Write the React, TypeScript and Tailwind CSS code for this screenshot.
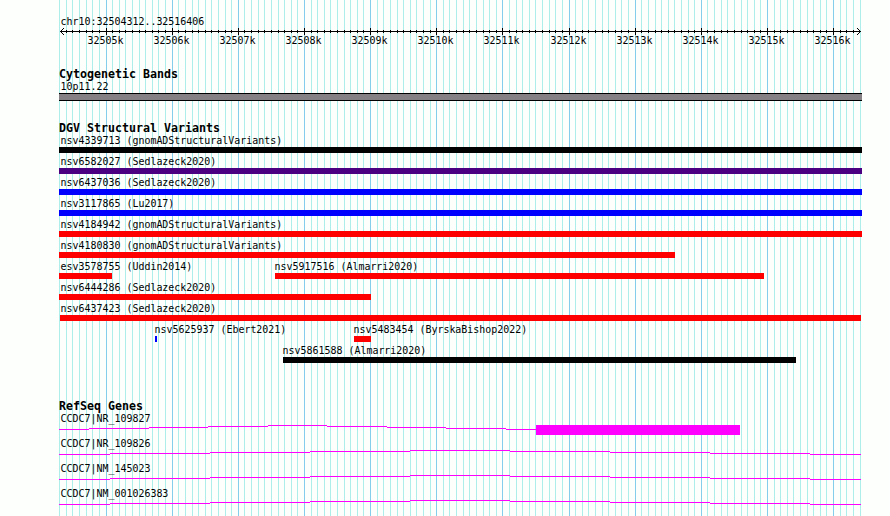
interface Feature {
  label: string
  start: number
  end: number
  color: string
}

interface Gene {
  label: string
  steps: [number, number][]
  exon?: [number, number]
}

const LEFT = 59
// 800px over 12095 bases, one grid line per 100 bases
const GRID_STEP = 80000 / 12095
const GRID = Array.from({ length: 122 }, (_, i) => Math.floor(59.735 + i * GRID_STEP))
const MAJOR = GRID.filter((_, i) => i % 10 === 7)
const MINOR = GRID.filter((_, i) => i % 10 !== 7)

const RED = '#ff0000'
const BLUE = '#0000ff'
const BLACK = '#000000'

const rows: Feature[][] = [
  [{ label: 'nsv4339713 (gnomADStructuralVariants)', start: 59, end: 862, color: BLACK }],
  [{ label: 'nsv6582027 (Sedlazeck2020)', start: 59, end: 862, color: '#4b0082' }],
  [{ label: 'nsv6437036 (Sedlazeck2020)', start: 59, end: 862, color: BLUE }],
  [{ label: 'nsv3117865 (Lu2017)', start: 59, end: 862, color: BLUE }],
  [{ label: 'nsv4184942 (gnomADStructuralVariants)', start: 59, end: 862, color: RED }],
  [{ label: 'nsv4180830 (gnomADStructuralVariants)', start: 59, end: 675, color: RED }],
  [
    { label: 'esv3578755 (Uddin2014)', start: 59, end: 112, color: RED },
    { label: 'nsv5917516 (Almarri2020)', start: 275, end: 764, color: RED },
  ],
  [{ label: 'nsv6444286 (Sedlazeck2020)', start: 59, end: 371, color: RED }],
  [{ label: 'nsv6437423 (Sedlazeck2020)', start: 60, end: 861, color: RED }],
  [
    { label: 'nsv5625937 (Ebert2021)', start: 155, end: 157, color: BLUE },
    { label: 'nsv5483454 (ByrskaBishop2022)', start: 354, end: 371, color: RED },
  ],
  [{ label: 'nsv5861588 (Almarri2020)', start: 283, end: 796, color: BLACK }],
]

// intron line as [x, offset from the row's lowest level]
const longIntron: [number, number][] = [
  [59, 0], [110, 1], [210, 2], [310, 3], [410, 4], [510, 3], [610, 2], [710, 1], [810, 0], [861, 0],
]

const genes: Gene[] = [
  {
    label: 'CCDC7|NR_109827',
    steps: [[59, 0], [89, 1], [149, 2], [208, 3], [268, 4], [327, 3], [387, 2], [446, 1], [506, 0], [536, 0]],
    exon: [536, 740],
  },
  { label: 'CCDC7|NR_109826', steps: longIntron },
  { label: 'CCDC7|NM_145023', steps: longIntron },
  { label: 'CCDC7|NM_001026383', steps: longIntron },
]

export default function App() {
  return (
    <div className="relative h-[516px] w-[890px] overflow-hidden bg-[#fcfffc] font-['DejaVu_Sans_Mono',monospace] text-black">
      <GridLines />
      <main className="relative flex flex-col pl-[59px] pt-4">
        <Label text="chr10:32504312..32516406" inset={1.5} />
        <Ruler />
        <section className="mt-[21px]">
          <Title text="Cytogenetic Bands" />
          <Label text="10p11.22" inset={1.5} />
          <div className="h-2 w-[803px] border-y border-black bg-[#848084]" />
        </section>
        <section className="mt-[21px]">
          <Title text="DGV Structural Variants" />
          {rows.map((row, i) => (
            <div key={i} className="grid h-[21px]">
              {row.map(feature => (
                <FeatureBar key={feature.label} feature={feature} />
              ))}
            </div>
          ))}
        </section>
        <section className="mt-[34px]">
          <Title text="RefSeq Genes" />
          {genes.map(gene => (
            <GeneRow key={gene.label} gene={gene} />
          ))}
        </section>
      </main>
    </div>
  )
}

function GridLines() {
  return (
    <svg className="absolute inset-0" width="890" height="516" shapeRendering="crispEdges">
      {MINOR.map(x => (
        <rect key={x} x={x} y={0} width={1} height={516} fill="#adeeea" />
      ))}
      {MAJOR.map(x => (
        <rect key={x} x={x} y={0} width={1} height={516} fill="#84ceeb" />
      ))}
    </svg>
  )
}

function Ruler() {
  return (
    <div className="h-[19px] w-[803px]">
      <svg className="block" width="803" height="7" viewBox="59 28 803 7" shapeRendering="crispEdges">
        <rect x={60} y={31} width={801} height={1} />
        {MINOR.filter(x => x > 62 && x < 858).map(x => (
          <rect key={x} x={x} y={30} width={1} height={3} />
        ))}
        {MAJOR.map(x => (
          <rect key={x} x={x} y={28} width={1} height={7} />
        ))}
        <path d="M60 31h1v1h-1zM61 30h1v1h-1zM62 29h1v1h-1zM63 28h1v1h-1zM61 32h1v1h-1zM62 33h1v1h-1zM63 34h1v1h-1z" />
        <path d="M860 31h1v1h-1zM859 30h1v1h-1zM858 29h1v1h-1zM857 28h1v1h-1zM859 32h1v1h-1zM858 33h1v1h-1zM857 34h1v1h-1z" />
      </svg>
      <div className="grid">
        {MAJOR.map((x, i) => (
          <div key={x} className="col-start-1 row-start-1" style={{ marginLeft: x - LEFT - 20 }}>
            <Label text={`${32505 + i}k`} inset={1.5} />
          </div>
        ))}
      </div>
    </div>
  )
}

function FeatureBar({ feature }: { feature: Feature }) {
  const { label, start, end, color } = feature
  return (
    <div className="col-start-1 row-start-1" style={{ marginLeft: start - LEFT }}>
      <Label text={label} inset={start <= 60 ? 60.5 - start : -0.5} />
      <div className="h-1.5" style={{ width: end - start, background: color }} />
    </div>
  )
}

function GeneRow({ gene }: { gene: Gene }) {
  return (
    <div className="h-[25px]">
      <Label text={gene.label} inset={1.5} />
      <svg className="block" width="803" height="12" viewBox="59 0 803 12" shapeRendering="crispEdges">
        {gene.steps.slice(0, -1).map(([x, level], i) => (
          <rect key={x} x={x} y={4 - level} width={gene.steps[i + 1][0] - x} height={1} fill="#ff00ff" />
        ))}
        {gene.exon && (
          <rect x={gene.exon[0]} y={0} width={gene.exon[1] - gene.exon[0]} height={10} fill="#ff00ff" />
        )}
      </svg>
    </div>
  )
}

function Title({ text }: { text: string }) {
  return <h2 className="h-[13px] whitespace-pre text-[11.63px] font-bold leading-3">{text}</h2>
}

function Label({ text, inset }: { text: string; inset: number }) {
  return (
    <div
      className="h-3 scale-y-110 whitespace-pre text-[9.967px] leading-[11px]"
      style={{ marginLeft: inset }}
    >
      {text}
    </div>
  )
}
